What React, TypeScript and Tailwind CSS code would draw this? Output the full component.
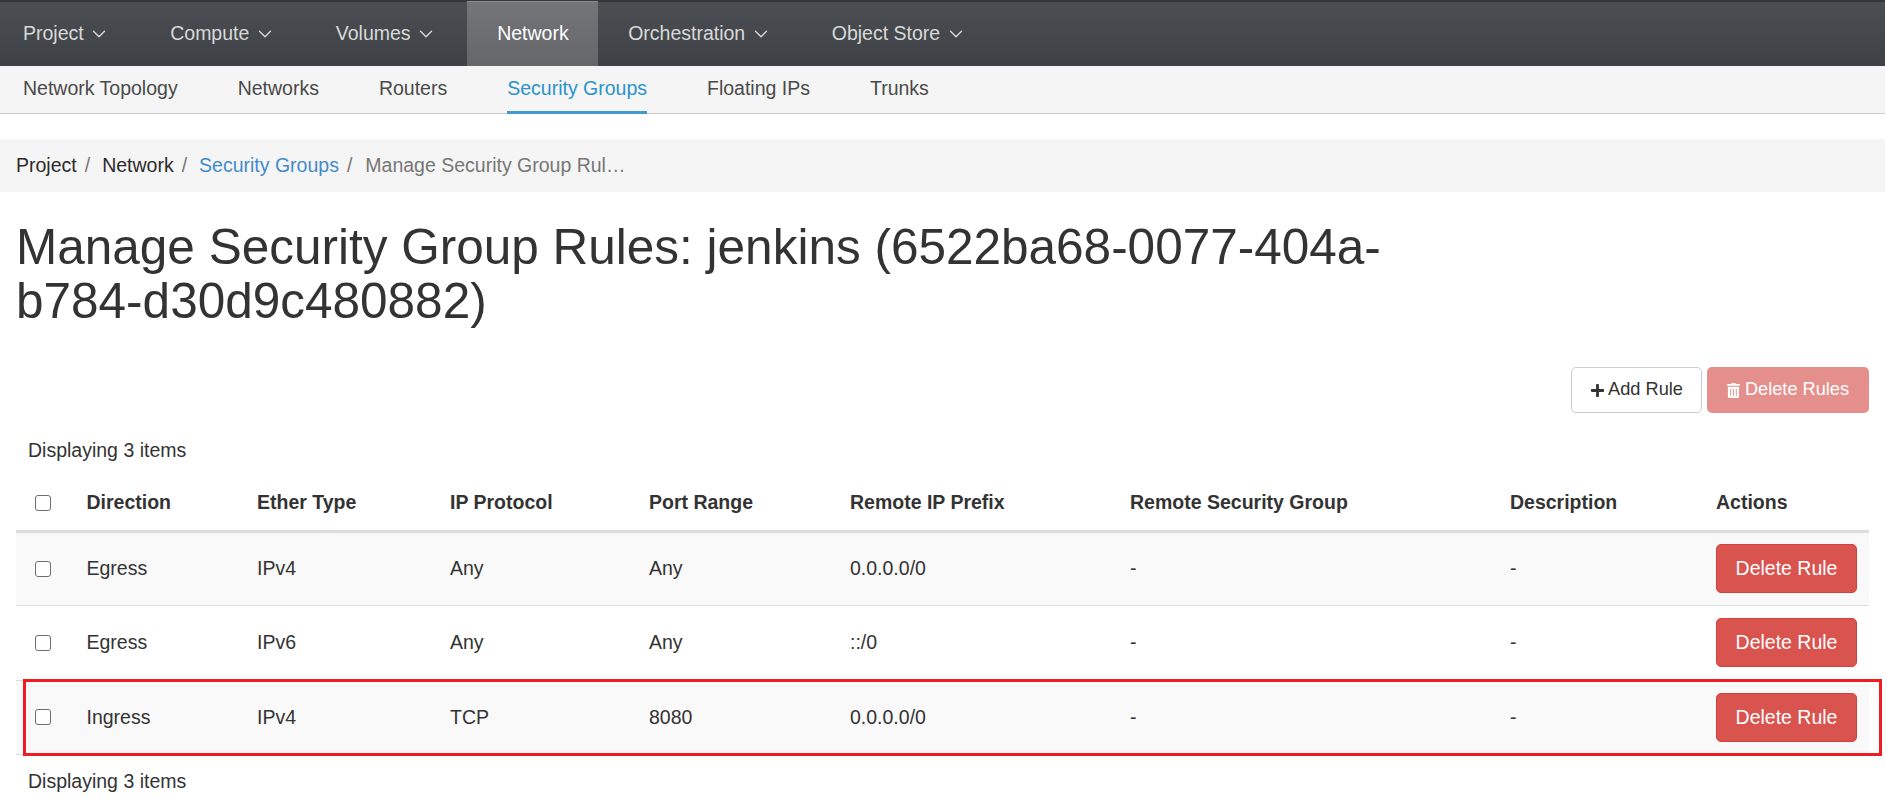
import { ChevronDown } from "lucide-react";
import { FaPlus, FaTrashAlt } from "react-icons/fa";

const topItems = ["Project", "Compute", "Volumes", "Network", "Orchestration", "Object Store"];
const subItems = ["Network Topology", "Networks", "Routers", "Security Groups", "Floating IPs", "Trunks"];
const columns = ["Direction", "Ether Type", "IP Protocol", "Port Range", "Remote IP Prefix", "Remote Security Group", "Description", "Actions"];
const rows = [
	["Egress", "IPv4", "Any", "Any", "0.0.0.0/0", "-", "-"],
	["Egress", "IPv6", "Any", "Any", "::/0", "-", "-"],
	["Ingress", "IPv4", "TCP", "8080", "0.0.0.0/0", "-", "-"],
];

const Checkbox = () => (
	<span className="block w-[16px] h-[16px] ml-[19px] rounded-[3px] border-[1.5px] border-[#6e6e6e] bg-white" />
);

export default function App() {
	return (
		<div className="w-[1885px] h-[811px] overflow-hidden bg-white text-[#333] text-[19.5px] font-['Liberation_Sans',Arial,sans-serif]">
			<nav className="h-[66px] flex border-t-2 border-[#33373a] bg-gradient-to-b from-[#4b4f53] to-[#3d4145]">
				<ul className="flex -ml-[7px]">
					{topItems.map((item) =>
						item === "Network" ? (
							<li key={item} className="flex items-center pl-[30px] pr-[29.5px] -mt-[1px] border-t border-[#8a8c8f] bg-gradient-to-b from-[#737579] to-[#646669] text-white">
								{item}
							</li>
						) : (
							<li key={item} className="flex items-center px-[30px] text-[#d8d8d8]">
								{item}
								<ChevronDown className="ml-[4.5px] w-[22px] h-[22px]" strokeWidth={1.5} />
							</li>
						),
					)}
				</ul>
			</nav>

			<div className="h-[48px] flex gap-[60px] pl-[23px] bg-[#f5f5f5] border-b border-[#cccccc] text-[#4a4a4a]">
				{subItems.map((item) =>
					item === "Security Groups" ? (
						<span key={item} className="h-[48px] flex items-center border-b-[3px] border-[#429ad0] text-[#2a93c9]">
							{item}
						</span>
					) : (
						<span key={item} className="flex items-center pb-[2px]">
							{item}
						</span>
					),
				)}
			</div>

			<div className="mt-[25px] h-[53px] flex items-center pl-[16px] bg-[#f5f5f5]">
				<span className="text-[#2b2b2b]">Project</span>
				<span className="text-[#777] ml-[8px] mr-[12px]">/</span>
				<span className="text-[#2b2b2b]">Network</span>
				<span className="text-[#777] ml-[8px] mr-[12px]">/</span>
				<span className="text-[#428bca]">Security Groups</span>
				<span className="text-[#777] ml-[8px] mr-[13px]">/</span>
				<span className="text-[#777]">Manage Security Group Rul…</span>
			</div>

			<h1 className="mt-[28px] mx-[16px] w-[1400px] text-[49.5px] leading-[54px] font-normal text-[#333]">
				Manage Security Group Rules: jenkins (6522ba68-0077-404a-b784-d30d9c480882)
			</h1>

			<div className="mt-[39px] mx-[16px] flex justify-end gap-[5px] text-[18.2px]">
				<button className="w-[131px] h-[46px] flex items-center justify-center gap-[3px] rounded-[5px] border border-[#cccccc] bg-white">
					<FaPlus className="w-[15px] h-[15px]" />
					Add Rule
				</button>
				<button className="w-[162px] h-[46px] flex items-center justify-center gap-[5px] rounded-[5px] bg-[#e58f8c] text-white">
					<FaTrashAlt className="w-[13px] h-[15px]" />
					Delete Rules
				</button>
			</div>

			<div className="relative mx-[16px]">
				<p className="h-[61px] pt-[14px] pl-[12px] flex items-center">Displaying 3 items</p>
				<table className="w-[1853px] table-fixed border-collapse">
					<colgroup>
						<col className="w-[60.5px]" />
						<col className="w-[170.5px]" />
						<col className="w-[193px]" />
						<col className="w-[199px]" />
						<col className="w-[201px]" />
						<col className="w-[280px]" />
						<col className="w-[380px]" />
						<col className="w-[206px]" />
					</colgroup>
					<thead>
						<tr className="h-[57px] border-b-[3px] border-[#dddddd]">
							<th className="p-0 pt-[2px]">
								<Checkbox />
							</th>
							{columns.map((col) => (
								<th key={col} className="px-[10px] pt-[2px] text-left font-bold">
									{col}
								</th>
							))}
						</tr>
					</thead>
					<tbody>
						{rows.map((row, i) => (
							<tr key={i} className={`h-[74.5px] border-b border-[#dddddd] ${i % 2 === 0 ? "bg-[#f9f9f9]" : "bg-white"}`}>
								<td className="p-0">
									<Checkbox />
								</td>
								{row.map((cell, j) => (
									<td key={j} className="px-[10px]">
										{cell}
									</td>
								))}
								<td className="px-[10px]">
									<button className="w-[141px] h-[49px] rounded-[5px] border border-[#d43f3a] bg-[#d9534f] text-white">
										Delete Rule
									</button>
								</td>
							</tr>
						))}
					</tbody>
				</table>
				<p className="h-[54px] pl-[12px] flex items-center">Displaying 3 items</p>
				<div className="absolute left-[7px] top-[266px] w-[1859px] h-[77px] border-[3px] border-[#ee1c25] pointer-events-none" />
			</div>
		</div>
	);
}
